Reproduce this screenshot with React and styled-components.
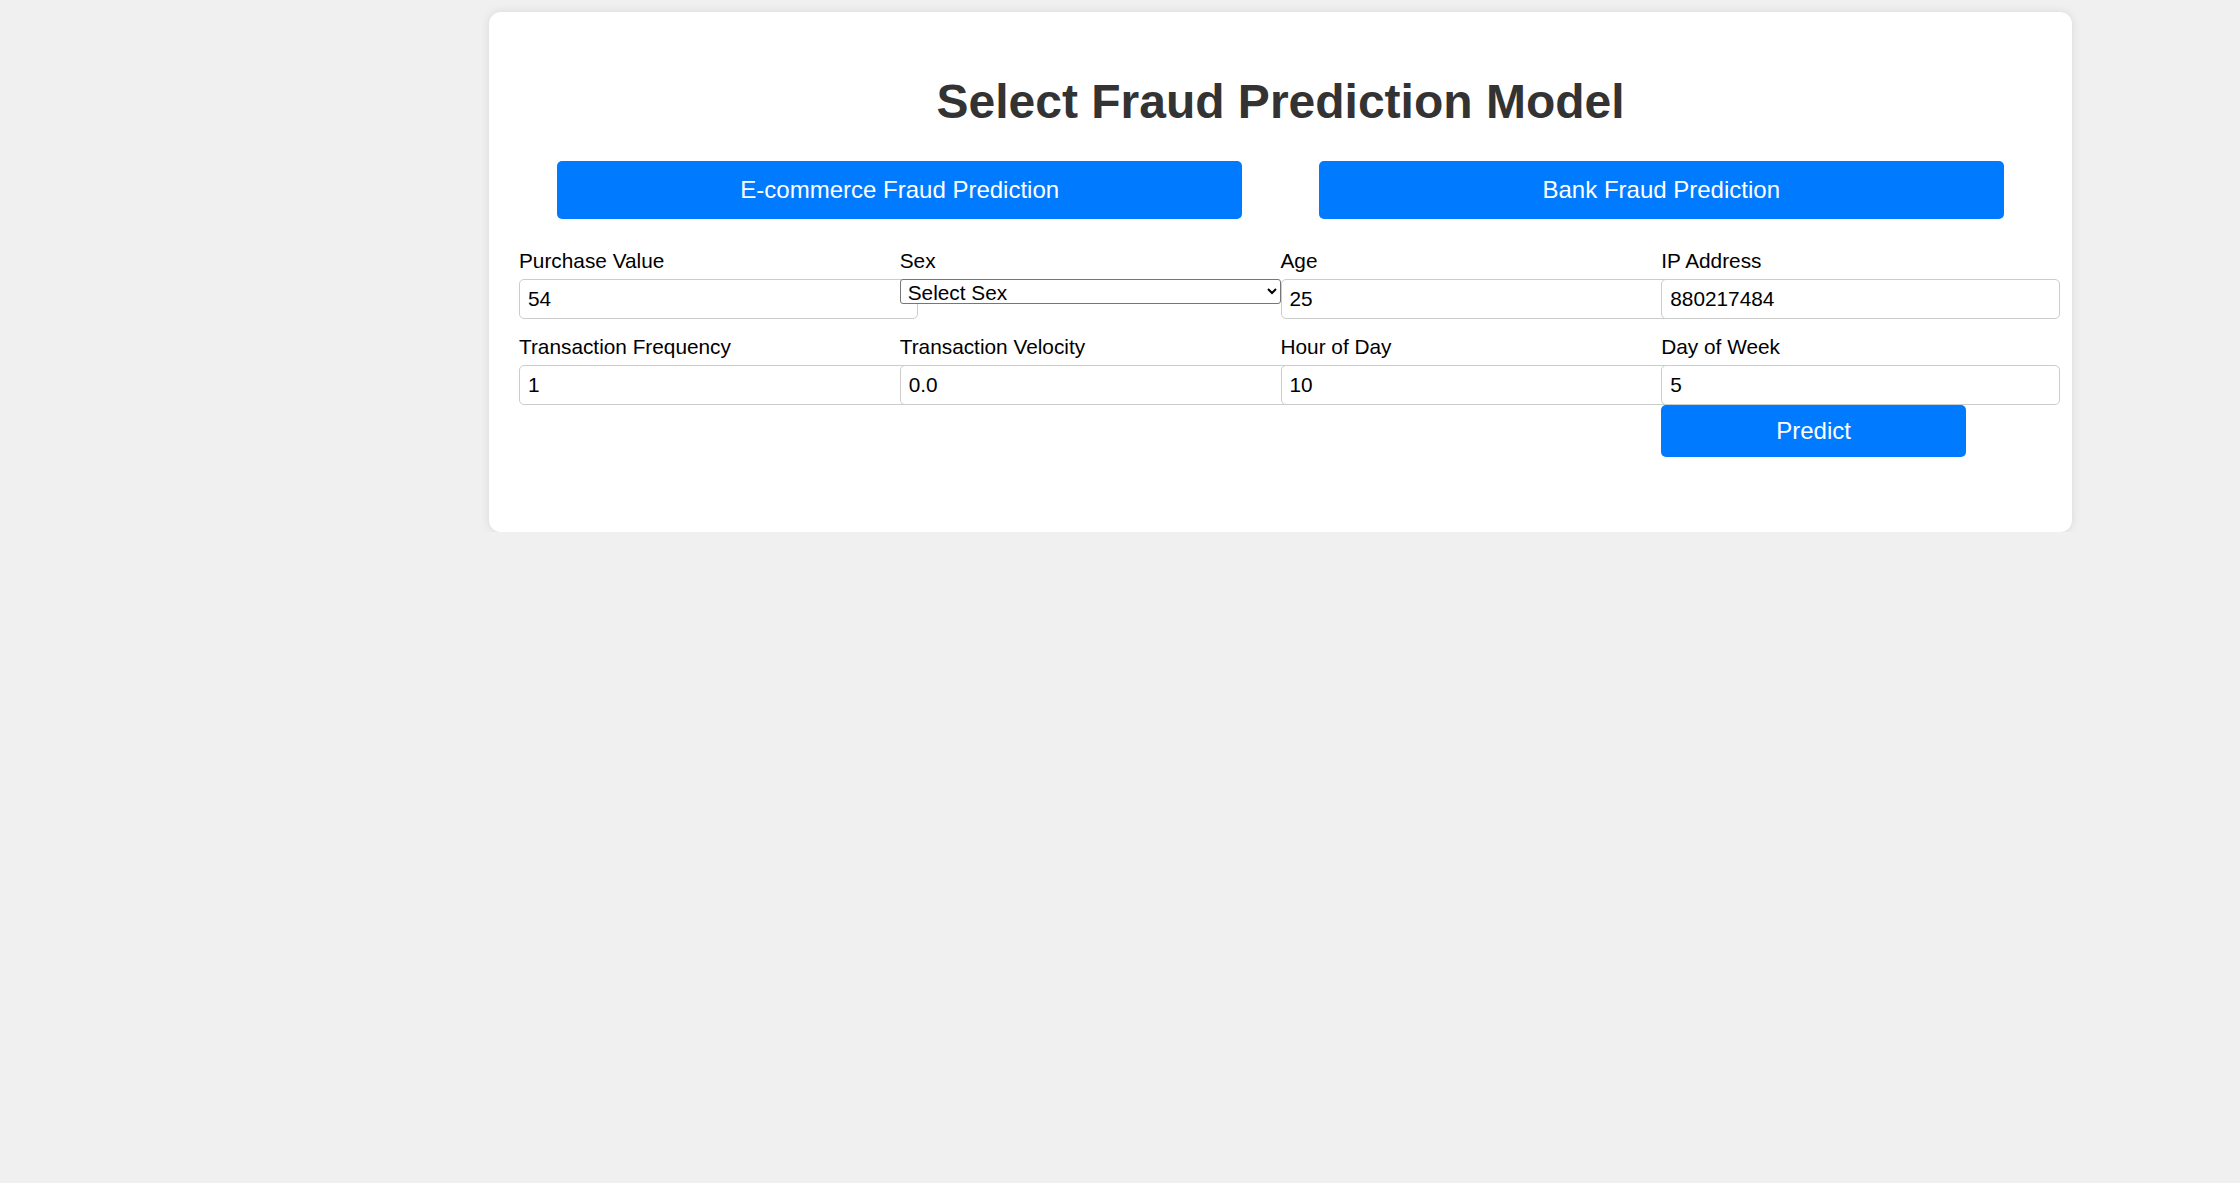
import React from "react";
import styled, { createGlobalStyle } from "styled-components";

const GlobalStyle = createGlobalStyle`
  html, body {
    margin: 0;
    padding: 0;
    background: #f0f0f0;
    font-family: "Liberation Sans", Arial, sans-serif;
  }
  * { font-family: "Liberation Sans", Arial, sans-serif; }
`;

const Page = styled.div`
  display: flex;
  align-items: flex-start;
  padding: 12px 168px 0 489px;
`;

const Card = styled.div`
  flex: 1;
  background: #fff;
  border-radius: 12px;
  box-shadow: 0 0 10px rgba(0, 0, 0, 0.1);
  padding: 30px 30px 30px;
`;

const Title = styled.h1`
  margin: 32px 0;
  text-align: center;
  color: #333;
  font-size: 48px;
  font-weight: bold;
  line-height: normal;
`;

const ModelBar = styled.div`
  display: flex;
  justify-content: space-around;
  margin-bottom: 30px;
`;

const BlueButton = styled.button`
  background: #007bff;
  color: #fff;
  border: none;
  border-radius: 5px;
  font-size: 24px;
  line-height: normal;
  cursor: pointer;
  padding: ${(p) => (p.$size === "large" ? "15px" : "12px")} 0;
  width: ${(p) => (p.$size === "large" ? "45%" : "80%")};
  display: block;
`;

const Form = styled.form`
  display: grid;
  grid-template-columns: repeat(4, 1fr);
  row-gap: 16px;
  margin-bottom: 45px;
`;

const Field = styled.div`
  min-width: 0;
`;

const Label = styled.label`
  display: block;
  font-size: 20.8px;
  line-height: 24px;
  color: #000;
  margin-bottom: 6px;
`;

const Input = styled.input`
  display: block;
  position: relative;
  box-sizing: content-box;
  width: 100%;
  height: 24px;
  padding: 7px 8px;
  margin: 0;
  font-size: 20.8px;
  color: #000;
  background: #fff;
  border: 1px solid #ccc;
  border-radius: 5px;
  outline: none;
`;

const Select = styled.select`
  display: block;
  position: relative;
  z-index: 1;
  box-sizing: border-box;
  width: 100%;
  height: 25px;
  margin: 0;
  padding: 0 2px 0 3px;
  font-size: 20.8px;
  color: #000;
  background: #fff;
  border: 1px solid #767676;
  border-radius: 3px;
`;

const fields = [
  { label: "Purchase Value", value: "54" },
  { label: "Sex", select: true },
  { label: "Age", value: "25" },
  { label: "IP Address", value: "880217484" },
  { label: "Transaction Frequency", value: "1" },
  { label: "Transaction Velocity", value: "0.0" },
  { label: "Hour of Day", value: "10" },
  { label: "Day of Week", value: "5", action: true },
];

export default function App() {
  return (
    <>
      <GlobalStyle />
      <Page>
        <Card>
          <Title>Select Fraud Prediction Model</Title>
          <ModelBar>
            <BlueButton type="button" $size="large">E-commerce Fraud Prediction</BlueButton>
            <BlueButton type="button" $size="large">Bank Fraud Prediction</BlueButton>
          </ModelBar>
          <Form onSubmit={(e) => e.preventDefault()}>
            {fields.map((f) => (
              <Field key={f.label}>
                <Label>{f.label}</Label>
                {f.select ? (
                  <Select defaultValue="">
                    <option value="">Select Sex</option>
                    <option value="M">Male</option>
                    <option value="F">Female</option>
                  </Select>
                ) : (
                  <Input type="text" defaultValue={f.value} />
                )}
                {f.action && <BlueButton type="submit">Predict</BlueButton>}
              </Field>
            ))}
          </Form>
        </Card>
      </Page>
    </>
  );
}
